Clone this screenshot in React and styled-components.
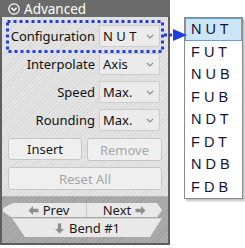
import React from 'react';
import styled, { createGlobalStyle } from 'styled-components';

const Global = createGlobalStyle`
  html, body {
    margin: 0;
    background: #fff;
  }
  body {
    font-family: "Noto Sans", "Liberation Sans", sans-serif;
    color: #111;
  }
`;

const configs = ['N U T', 'F U T', 'N U B', 'F U B', 'N D T', 'F D T', 'N D B', 'F D B'];

const rows = [
  { label: 'Configuration', value: 'N U T' },
  { label: 'Interpolate', value: 'Axis' },
  { label: 'Speed', value: 'Max.' },
  { label: 'Rounding', value: 'Max.' },
];

function Chevron() {
  return (
    <svg width="8" height="5" viewBox="0 0 8 5">
      <path d="M1 1 L4 4 L7 1" fill="none" stroke="#8a8a8a" strokeWidth="1.1" />
    </svg>
  );
}

function CollapseIcon() {
  return (
    <svg width="12" height="12" viewBox="0 0 12 12">
      <circle cx="6" cy="6" r="5.2" fill="none" stroke="#fff" strokeWidth="1.2" />
      <path d="M3.4 4.8 L6 7.4 L8.6 4.8" fill="none" stroke="#fff" strokeWidth="1.4" />
    </svg>
  );
}

function Arrow({ dir }) {
  const rot = { left: 0, right: 180, down: 270 }[dir];
  return (
    <svg width="11" height="11" viewBox="0 0 11 11" style={{ transform: `rotate(${rot}deg)` }}>
      <path d="M0.5 5.5 L5 1 L5 3.8 L10.5 3.8 L10.5 7.2 L5 7.2 L5 10 Z" fill="#8e8e8e" />
    </svg>
  );
}

function App() {
  return (
    <Stage>
      <Global />
      <Panel>
        <Header>
          <CollapseIcon />
          <span>Advanced</span>
        </Header>

        <Form>
          {rows.map((row) => (
            <React.Fragment key={row.label}>
              <Label>{row.label}</Label>
              <Select>
                <span>{row.value}</span>
                <Chevron />
              </Select>
            </React.Fragment>
          ))}
        </Form>

        <ButtonRow>
          <Button>Insert</Button>
          <Button disabled>Remove</Button>
        </ButtonRow>
        <ResetRow>
          <Button disabled>Reset All</Button>
        </ResetRow>

        <NavArea>
          <NavRow>
            <PrevButton>
              <Arrow dir="left" />
              Prev
            </PrevButton>
            <NextButton>
              Next
              <Arrow dir="right" />
            </NextButton>
          </NavRow>
          <BendButton>
            <Arrow dir="down" />
            Bend #1
          </BendButton>
        </NavArea>
      </Panel>

      <Menu>
        {configs.map((c, i) => (
          <MenuItem key={c} $active={i === 0}>
            {c}
          </MenuItem>
        ))}
      </Menu>

      <Annotation width="245" height="248" viewBox="0 0 245 248">
        <rect
          x="7.5"
          y="21.5"
          width="155"
          height="30"
          fill="none"
          stroke="#1f3ee6"
          strokeWidth="3"
          strokeDasharray="3 3"
        />
        <line x1="164" y1="35" x2="174" y2="35" stroke="#1f3ee6" strokeWidth="3" strokeDasharray="3 2" />
        <path d="M173 29 L187 35 L173 41 Z" fill="#1f3ee6" />
      </Annotation>
    </Stage>
  );
}

const Stage = styled.div`
  position: relative;
  width: 245px;
  height: 248px;
  overflow: hidden;
`;

const Panel = styled.div`
  width: 170px;
  height: 245px;
  box-sizing: border-box;
  border: 2px solid #5e5e5e;
  border-top: none;
  display: flex;
  flex-direction: column;
  background: repeating-linear-gradient(135deg, #e4e4e4 0 2px, #d9d9d9 2px 3px);
`;

const Header = styled.div`
  height: 17px;
  flex-shrink: 0;
  background: #6b6b6b;
  color: #fff;
  display: flex;
  align-items: center;
  gap: 4px;
  font-size: 13.5px;
  margin: 0 -2px;
  padding-left: 8px;
`;

const Form = styled.div`
  display: grid;
  grid-template-columns: 93px 61px;
  column-gap: 4px;
  row-gap: 6px;
  padding-top: 8px;
`;

const Label = styled.div`
  height: 22px;
  display: flex;
  align-items: center;
  justify-content: flex-end;
  font-size: 13px;
`;

const Select = styled.div`
  height: 22px;
  box-sizing: border-box;
  background: #ebebeb;
  border: 1px solid #cdcdcd;
  border-radius: 2px;
  display: flex;
  align-items: center;
  justify-content: space-between;
  padding: 0 5px 0 3px;
  font-size: 13px;
`;

const ButtonRow = styled.div`
  display: grid;
  grid-template-columns: 74px 75px;
  column-gap: 5px;
  padding-left: 6px;
  margin-top: 7px;
`;

const ResetRow = styled.div`
  display: grid;
  grid-template-columns: 154px;
  padding-left: 6px;
  margin-top: 6px;
`;

const Button = styled.button`
  height: ${(p) => (p.disabled ? '23px' : '22px')};
  box-sizing: border-box;
  background: #efefef;
  border: 1px solid #c6c6c6;
  border-radius: 3px;
  font-family: inherit;
  font-size: 13px;
  color: ${(p) => (p.disabled ? '#a6a6a6' : '#1a1a1a')};
  padding: 0;
`;

const NavArea = styled.div`
  flex: 1;
  margin-top: 6px;
  border-top: 1px solid #b4b4b4;
  background: repeating-linear-gradient(135deg, #acacac 0 2px, #9f9f9f 2px 3px);
  display: flex;
  flex-direction: column;
  padding-top: 6px;
`;

const NavRow = styled.div`
  display: flex;
  height: 14px;
  padding-left: 1px;
`;

const NavButton = styled.div`
  background: #e9e9e9;
  display: flex;
  align-items: center;
  justify-content: center;
  gap: 4px;
  font-size: 13px;
  color: #1a1a1a;
`;

const PrevButton = styled(NavButton)`
  width: 84px;
  padding-left: 8px;
  box-sizing: border-box;
  border-right: 1px solid #c8c8c8;
  clip-path: polygon(10px 0, 100% 0, 100% 100%, 8px 100%, 0 60%, 0 35%);
`;

const NextButton = styled(NavButton)`
  width: 75px;
  clip-path: polygon(0 0, calc(100% - 5px) 0, 100% 50%, calc(100% - 5px) 100%, 0 100%);
`;

const BendButton = styled(NavButton)`
  margin: 1px 0 0 10px;
  width: 150px;
  height: 19px;
  border-top: 1px solid #d2d2d2;
  box-sizing: border-box;
  clip-path: polygon(0 0, 100% 0, calc(100% - 12px) 100%, 13px 100%);
`;

const Menu = styled.div`
  position: absolute;
  left: 184px;
  top: 17px;
  width: 59px;
  box-sizing: border-box;
  background: #fff;
  border: 1px solid #8a8a8a;
  box-shadow: 2px 2px 2px rgba(0, 0, 0, 0.25);
`;

const MenuItem = styled.div`
  height: 22.5px;
  box-sizing: border-box;
  display: flex;
  align-items: center;
  padding-left: 5px;
  font-family: "Liberation Sans", sans-serif;
  font-size: 14.5px;
  color: #14143a;
  background: ${(p) => (p.$active ? '#cde6f7' : 'transparent')};
  border: 1px solid ${(p) => (p.$active ? '#5fa2d6' : 'transparent')};
`;

const Annotation = styled.svg`
  position: absolute;
  left: 0;
  top: 0;
  pointer-events: none;
`;

export default App;
